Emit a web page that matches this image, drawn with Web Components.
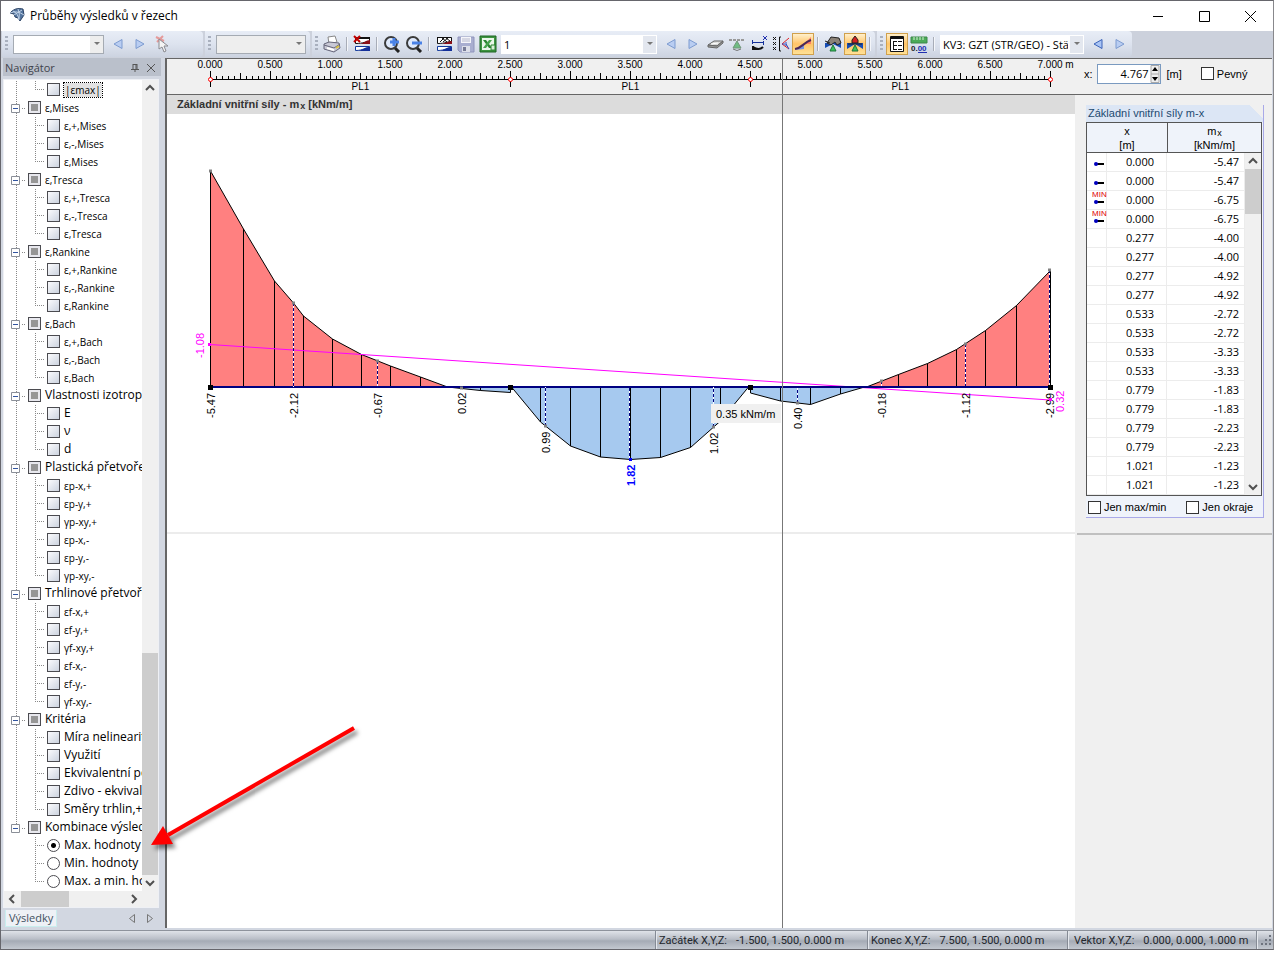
<!DOCTYPE html>
<html lang="cs">
<head>
<meta charset="utf-8">
<title>Průběhy výsledků v řezech</title>
<style>
html, body{
    margin: 0;
    height: 100%;
    background: #fff;
}
body{
    font: 12px "Open Sans", "Noto Sans", sans-serif;
    color: #000;
}
</style>
</head>
<body>
<result-window></result-window>

<script>
// ---------- icons, all on an 18 x 18 grid ----------
const ICONS = {
    prev: '<path d="M13 4.500v9L5 9z" fill="#b9cdf2" stroke="#7d9bd0"/>',
    next: '<path d="M5 4.500v9L13 9z" fill="#b9cdf2" stroke="#7d9bd0"/>',
    prevDark: '<path d="M13 4.500v9L5 9z" fill="#a9c4f5" stroke="#3a62b8"/>',
    pick: '<path d="M3 2l8 4M10 1L4 7" stroke="#e59a9a" stroke-width="2"/><path d="M6 4v10l3-2 2 5 2-1-2-5h4z" fill="#f4f4f4" stroke="#8a8a90"/>',
    print: '<path d="M5 2l7-1 2 6-8 2z" fill="#fff" stroke="#888"/><path d="M1 9l5-2 10 1 1 5-6 4-10-3z" fill="#c9c9d6" stroke="#66667a"/><path d="M1 10l10 3 6-4" fill="none" stroke="#66667a"/><path d="M4 13l7 2" stroke="#fff" stroke-width="2"/><path d="M13 13l3-2" stroke="#d8c040" stroke-width="2"/>',
    clear: '<path d="M2.500 2.500h14v4c-4 0-6 2-14 2z" fill="#fff" stroke="#111"/><path d="M17 5c-4 0-6 3-10 4h10z" fill="#8a0f18"/><path d="M2 3h15" stroke="#111" stroke-width="2"/><path d="M2.500 11.500h14v1c-5 0-6 3-14 3z" fill="#fff" stroke="#123a9c"/><path d="M17 12c-5 0-7 3-12 4h12z" fill="#14309a"/><path d="M1 1l6 6M7 1L1 7" stroke="#c00000" stroke-width="2"/>',
    zoomIn: '<path d="M11 12l5 5" stroke="#222" stroke-width="3"/><circle cx="8" cy="8" r="6" fill="#dfe9fb" stroke="#3a3a3a" stroke-width="2"/><path d="M11 3v8M7 7h9" stroke="#4a82e6" stroke-width="3"/>',
    zoomOut: '<path d="M11 12l5 5" stroke="#222" stroke-width="3"/><circle cx="8" cy="8" r="6" fill="#dfe9fb" stroke="#3a3a3a" stroke-width="2"/><path d="M7 8h10" stroke="#4a82e6" stroke-width="3"/>',
    diagram: '<path d="M2.500 2.500h14v4c-4 0-6 2-14 2z" fill="#fff" stroke="#111"/><path d="M17 6c-4 0-6 2-10 3h10z" fill="#8a0f18"/><path d="M2 2.500h6M5 7l4-4M8 7l5-4M7 3l5 4M11 3l4 3" stroke="#111"/><path d="M2.500 11.500h14v1c-5 0-6 3-14 3z" fill="#fff" stroke="#123a9c"/><path d="M17 12c-5 0-7 3-12 4h12z" fill="#14309a"/>',
    save: '<path d="M1 2h16v15H3l-2-2z" fill="#a9aed0" stroke="#8f94bb"/><path d="M4 2h10v6H4z" fill="#f5f5fa"/><path d="M5 4h8M5 6h8" stroke="#b5b8cc"/><path d="M5 11h8v6H5z" fill="#dddfe9"/><path d="M6 12h3v4H6z" fill="#777b96"/>',
    excel: '<path d="M1 1h16v16H1z" fill="#3d9440" stroke="#1d6422"/><path d="M3 3h12v12H3z" fill="#eaf6ea"/><path d="M4 5h3l6 8h-3z" fill="#2a8431"/><path d="M13 5h-3l-6 8h3z" fill="#46a44c"/><path d="M12 10h4v5h-4z" fill="#d9efd9" stroke="#2a8431"/>',
    section: '<path d="M2 10l6-4h9l-6 5z" fill="#d8d8d8" stroke="#666"/><path d="M2 10v2l9 1 6-5V6l-6 5z" fill="#999" stroke="#666"/><path d="M5 9l7-1" stroke="#fff"/>',
    support: '<path d="M1 5h16" stroke="#999" stroke-width="2" stroke-dasharray="3 1"/><path d="M9 6l-4 7h8z" fill="#6fbd83" stroke="#72977a"/><path d="M5 14q4 3 8 0" fill="none" stroke="#777"/>',
    axes: '<path d="M2 7.500h12M2.500 5v4M13.500 6v4" stroke="#14309a"/><path d="M3 12q6 4 10 0M3 11v4M3 14h3" fill="none" stroke="#111" stroke-width="2"/><path d="M13 1l4 4M17 1l-4 4" stroke="#2030b0"/>',
    extremes: '<path d="M1 2l3 3M4 2L1 5M1 7l3 3M4 7l-3 3M1 12l3 3M4 12l-3 3" stroke="#111"/><path d="M9 2H7.500v14H9" stroke="#111"/><path d="M17 3l-7 6 7 5" fill="none" stroke="#e02020"/><path d="M10 9h3M14 7v4M14 9l3 5" stroke="#3048c0"/>',
    smooth: '<path d="M10 9l7-7v7z" fill="#ff8066"/><path d="M1 15l9-5v4z" fill="#7590de"/><path d="M1 14c7-1 8-6 16-9" fill="none" stroke="#4b2858" stroke-width="2"/>',
    hand: '<path d="M1 8h16v5L9 9 1 13z" fill="#164cb4"/><path d="M3 8l4-6 8 1 2 5-4 2-2-3-4 3z" fill="#8b8278" stroke="#222"/><path d="M9 10l-3 6h6z" fill="#39c65c" stroke="#20733a"/><path d="M1 6l5 2" stroke="#222"/>',
    load: '<path d="M1 8h16v6L9 9 1 14z" fill="#164cb4"/><path d="M6 8V5l3-4 3 4v3z" fill="#d32020" stroke="#222"/><path d="M2 9h14" stroke="#222"/><path d="M9 10l-3 6h6z" fill="#39c65c" stroke="#20733a"/>',
    list: '<path d="M2.500 1.500h13v15h-13z" fill="#fff" stroke="#111"/><path d="M2 3h14" stroke="#111" stroke-width="2"/><path d="M5.500 6v8M5 6.500h4M5 10.500h4M5 14.500h4M10 6.500h4M10 10.500h4M10 14.500h4" stroke="#111"/>',
    values: '<path d="M1 2h16v6H1z" fill="#4cab59" stroke="#3d8848"/><path d="M4 2v3M7 2v3M10 2v3M13 2v3" stroke="#d9f0d9"/><text x="1" y="16" font-size="8" font-weight="bold" font-family="Liberation Sans" fill="#222">0.<tspan fill="#2030b0">00</tspan></text><path d="M8 17.500h9" stroke="#2030b0"/>'
};

const icon = name => `<svg width="18" height="18" viewBox="0 0 18 18" fill="none" aria-hidden="true">${ICONS[name]}</svg>`;

// ---------- title bar ----------
class TitleBar extends HTMLElement{
    constructor(){
        super();
        this.attachShadow({mode: 'open'}).innerHTML = `
<style>
:host{ display: flex; align-items: center; height: 30px; padding-left: 7px; background: #fff; }
h1{ flex: 1; margin: 0 0 1px 4px; font-size: 12px; font-weight: normal; }
button{ width: 46px; height: 28px; padding: 0; border: 0; background: none; }
svg{ display: block; margin: auto; }
.logo{ margin: 0 0 3px; }
</style>
<svg class="logo" width="18" height="16" viewBox="0 0 18 16"><path d="M2 6Q7 0 15 2l1 6-4 6-2-3-3-1-1-3z" fill="#54759f" stroke="#2c4365"/><path d="M2 6q7-3 14 2M5 4q5 2 6 9M10 2q2 5 1 10M6 8l8-5" fill="none" stroke="#c3d4e8"/></svg>
<h1><slot></slot></h1>
<button aria-label="Minimalizovat"><svg width="11" height="11"><path d="M0 5.500h10" stroke="#000"/></svg></button>
<button aria-label="Maximalizovat"><svg width="11" height="11"><path d="M.5.500h10v10H.5z" fill="none" stroke="#000"/></svg></button>
<button aria-label="Zavřít"><svg width="11" height="11"><path d="M0 0l11 11M11 0L0 11" stroke="#000"/></svg></button>`;
    }
}
customElements.define('title-bar', TitleBar);

// ---------- toolbar parts ----------
class ToolGroup extends HTMLElement{
    constructor(){
        super();
        this.attachShadow({mode: 'open'}).innerHTML = `
<style>
:host{ display: flex; align-items: center; box-sizing: border-box; height: 26px; padding-right: 1px; border-radius: 0 4px 4px 0; background: linear-gradient(#e8edf6, #dde3ef 50%, #ccd3e0); }
i{ width: 3px; height: 16px; margin: 0 3px; background: repeating-linear-gradient(#a9b0be 0 2px, transparent 2px 4px); }
</style>
<i></i><slot></slot>`;
    }
}
customElements.define('tool-group', ToolGroup);

class ToolButton extends HTMLElement{
    constructor(){
        super();
        this.attachShadow({mode: 'open'}).innerHTML = `
<style>
:host{ display: block; }
button{ box-sizing: border-box; display: grid; place-items: center; width: 22px; height: 22px; padding: 0; border: 1px solid transparent; background: none; }
:host([on]) button{ border-color: #d0a04c; background: linear-gradient(#fff0cc, #ffc468 50%, #ffe196); }
</style>
<button aria-label="${this.getAttribute('icon')}">${icon(this.getAttribute('icon'))}</button>`;
    }
}
customElements.define('tool-button', ToolButton);

class ToolSeparator extends HTMLElement{
    constructor(){
        super();
        this.attachShadow({mode: 'open'}).innerHTML = `
<style>
:host{ display: block; width: 8px; height: 14px; }
i{ display: block; width: 1px; height: 14px; margin-left: 3px; background: #a8adb8; border-right: 1px solid #f4f6fa; }
</style><i></i>`;
    }
}
customElements.define('tool-separator', ToolSeparator);

class ComboBox extends HTMLElement{
    constructor(){
        super();
        const value = this.getAttribute('value') || '';
        this.attachShadow({mode: 'open'}).innerHTML = `
<style>
:host{ display: flex; box-sizing: border-box; height: 19px; margin: 0 3px 0 2px; border: 1px solid #fff; background: #fff; }
:host([framed]){ border-color: #a5abb3; }
:host([disabled]){ background: #eee; }
select{ flex: 1; min-width: 0; appearance: none; border: 0; padding: 0 2px; background: none; font: 11px "Open Sans", sans-serif; color: #000; }
span{ display: grid; place-items: center; width: 13px; background: #e3e7ef; }
:host([framed]) span{ background: #eee; }
</style>
<select aria-label="Výběr"><option>${value}</option></select>
<span><svg width="6" height="4"><path d="M0 0h6L3 3z" fill="#777"/></svg></span>`;
    }
}
customElements.define('combo-box', ComboBox);

class ToolBar extends HTMLElement{
    constructor(){
        super();
        this.attachShadow({mode: 'open'}).innerHTML = `
<style>
:host{ display: flex; gap: 2px; height: 27px; padding-left: 1px; background: #ccd1dc; }
.navigation{ min-width: 201px; }
.navigation combo-box, .cases combo-box{ width: 91px; }
.cases{ width: 105px; }
.results combo-box{ width: 156px; }
.loads combo-box{ width: 144px; }
</style>
<tool-group class="navigation">
    <combo-box framed></combo-box>
    <tool-button icon="prev"></tool-button><tool-button icon="next"></tool-button><tool-button icon="pick"></tool-button>
</tool-group>
<tool-group class="cases"><combo-box framed disabled></combo-box></tool-group>
<tool-group class="results">
    <tool-button icon="print"></tool-button><tool-separator></tool-separator>
    <tool-button icon="clear"></tool-button><tool-separator></tool-separator>
    <tool-button icon="zoomIn"></tool-button><tool-button icon="zoomOut"></tool-button><tool-separator></tool-separator>
    <tool-button icon="diagram"></tool-button><tool-button icon="save"></tool-button><tool-button icon="excel"></tool-button>
    <combo-box value="1"></combo-box>
    <tool-button icon="prev"></tool-button><tool-button icon="next"></tool-button>
    <tool-button icon="section"></tool-button><tool-button icon="support"></tool-button><tool-button icon="axes"></tool-button>
    <tool-button icon="extremes"></tool-button><tool-button icon="smooth" on></tool-button><tool-separator></tool-separator>
    <tool-button icon="hand"></tool-button><tool-button icon="load" on></tool-button><tool-separator></tool-separator>
</tool-group>
<tool-group class="loads">
    <tool-button icon="list" on></tool-button><tool-button icon="values"></tool-button><tool-separator></tool-separator>
    <combo-box value="KV3: GZT (STR/GEO) - Stä"></combo-box>
    <tool-button icon="prevDark"></tool-button><tool-button icon="next"></tool-button>
</tool-group>`;
    }
}
customElements.define('tool-bar', ToolBar);

// ---------- scroll bar: before / thumb / after are flex shares of the track ----------
class ScrollTrack extends HTMLElement{
    constructor(){
        super();
        const [before, thumb, after] = this.getAttribute('track').split(' ');
        this.attachShadow({mode: 'open'}).innerHTML = `
<style>
:host{ display: flex; flex-direction: column; background: #f0f0f0; }
:host([horizontal]){ flex-direction: row; }
svg{ flex: none; width: 16px; height: 16px; }
:host([horizontal]) svg{ transform: rotate(-90deg); }
i{ flex: ${thumb} 0 0px; background: #cdcdcd; }
b{ flex: ${before} 0 0px; }
b + i + b{ flex-grow: ${after}; }
</style>
<svg viewBox="0 0 16 16"><path d="M4 10l4-4 4 4" fill="none" stroke="#505050" stroke-width="2"/></svg>
<b></b><i></i><b></b>
<svg viewBox="0 0 16 16"><path d="M4 6l4 4 4-4" fill="none" stroke="#505050" stroke-width="2"/></svg>`;
    }
}
customElements.define('scroll-track', ScrollTrack);

// ---------- navigator ----------
class TreeRow extends HTMLElement{
    constructor(){
        super();
        const type = this.hasAttribute('radio') ? 'radio' : 'checkbox';
        this.attachShadow({mode: 'open'}).innerHTML = `
<style>
:host{ display: flex; height: 18px; white-space: nowrap; }
.rail{ display: grid; align-items: center; flex: none; width: 24px; padding-left: 7px; box-sizing: border-box; background: repeating-linear-gradient(#888 0 1px, transparent 1px 2px) 12px 0 / 1px 100% no-repeat; }
:host([norail]) .rail{ background: none; }
:host([lastgroup]) .rail{ background-size: 1px 9px; }
.rail svg{ display: none; }
:host([group]) .rail svg{ display: block; }
.branch{ flex: none; width: 19px; background:
    repeating-linear-gradient(#888 0 1px, transparent 1px 2px) 7px 0 / 1px 100% no-repeat,
    repeating-linear-gradient(90deg, #888 0 1px, transparent 1px 2px) 7px 8px / 9px 1px no-repeat; }
:host([last]) .branch{ background-size: 1px 9px, 9px 1px; }
:host([group]) .branch{ display: none; }
label{ display: flex; align-items: center; gap: 4px; height: 18px; }
input{ appearance: none; flex: none; box-sizing: border-box; width: 13px; height: 13px; margin: 0 0 2px; border: 1px solid #4b4b50; background: linear-gradient(135deg, #fbfbfd, #ccd3df); }
:host([group]) input{ background: #969696; border-color: #4b4b50; box-shadow: inset 0 0 0 2px #e8e8ee; }
input[type=radio]{ border-radius: 50%; background: #fff; }
input[type=radio]:checked{ background: radial-gradient(#000 0 2px, #fff 3px); }
span{ line-height: 16px; padding-bottom: 2px; }
:host([small]) span{ font-size: 10px; line-height: 14px; padding-bottom: 0; }
:host([selected]) span{ padding: 0 1px; background: #e2e2e2; outline: 1px dotted #000; }
</style>
<div class="rail"><svg width="15" height="11"><path d="M.5 1.500h8v8h-8z" fill="#fff" stroke="#8a8f98"/><path d="M2 5.500h5" stroke="#3355a0"/><path d="M11 5.500h1M13 5.500h1" stroke="#888"/></svg></div>
<div class="branch"></div>
<label><input type="${type}" name="row" ${this.hasAttribute('checked') ? 'checked' : ''}><span><slot></slot></span></label>`;
    }
}
customElements.define('tree-row', TreeRow);

const TREE = [
    ['ε,Mises', ['ε,+,Mises', 'ε,-,Mises', 'ε,Mises'], 'small'],
    ['ε,Tresca', ['ε,+,Tresca', 'ε,-,Tresca', 'ε,Tresca'], 'small'],
    ['ε,Rankine', ['ε,+,Rankine', 'ε,-,Rankine', 'ε,Rankine'], 'small'],
    ['ε,Bach', ['ε,+,Bach', 'ε,-,Bach', 'ε,Bach'], 'small'],
    ['Vlastnosti izotropn', ['E', 'ν', 'd'], ''],
    ['Plastická přetvoře', ['εp-x,+', 'εp-y,+', 'γp-xy,+', 'εp-x,-', 'εp-y,-', 'γp-xy,-'], ''],
    ['Trhlinové přetvoře', ['εf-x,+', 'εf-y,+', 'γf-xy,+', 'εf-x,-', 'εf-y,-', 'γf-xy,-'], ''],
    ['Kritéria', ['Míra nelinearity', 'Využití', 'Ekvivalentní po', 'Zdivo - ekvival', 'Směry trhlin,+'], ''],
    ['Kombinace výsled', ['Max. hodnoty', 'Min. hodnoty', 'Max. a min. ho'], 'radio']
];

class NavigatorPanel extends HTMLElement{
    constructor(){
        super();
        this.attachShadow({mode: 'open'}).innerHTML = `
<style>
:host{ display: flex; flex-direction: column; min-height: 0; background: #d2d7e1; }
header{ display: flex; align-items: center; height: 18px; flex: none; padding: 0 2px; background: #bac0cb; color: #3f434b; font-size: 11px; }
h2{ flex: 1; margin: 0; font-size: 11px; font-weight: normal; }
header button{ width: 16px; height: 16px; padding: 0; border: 0; background: none; }
.view{ flex: 1; min-height: 0; display: grid; grid-template: minmax(0, 1fr) 16px / minmax(0, 1fr) 16px; margin: 3px 2px 0 0; border: 1px solid #eef0f5; background: #fff; }
.tree{ overflow: hidden; font-size: 12px; padding-top: 1px; }
.corner{ background: #f0f0f0; }
footer{ display: flex; align-items: center; height: 20px; flex: none; gap: 12px; padding: 0 8px 0 2px; color: #3f434b; }
footer a{ margin-right: auto; padding: 0 3px; border: 1px solid #c9eeee; border-top: 0; background: #eef1f6; color: #3f5060; font-size: 11px; line-height: 16px; text-decoration: none; }
</style>
<header><h2>Navigátor</h2>
<button aria-label="Připnout"><svg width="8" height="8"><path d="M2 0v5M6 0v5M2 .5h4M0 5.500h8M4 5v3M5 0v5" stroke="#555"/></svg></button>
<button aria-label="Zavřít"><svg width="8" height="8"><path d="M0 0l8 8M8 0L0 8" stroke="#555"/></svg></button></header>
<div class="view">
    <div class="tree"></div>
    <scroll-track track="556 221 0"></scroll-track>
    <scroll-track horizontal track="1 47 56"></scroll-track>
    <div class="corner"></div>
</div>
<footer><a href="#">Výsledky</a>
<svg width="6" height="9"><path d="M5.500.5v8l-5-4z" fill="none" stroke="#777"/></svg>
<svg width="6" height="9"><path d="M.5.500v8l5-4z" fill="none" stroke="#777"/></svg></footer>`;

        const small = text => /^[εγ]/.test(text) ? 'small' : '';
        let rows = '<tree-row selected last small>|εmax|</tree-row>';
        TREE.forEach(([name, items, kind], g) => {
            const lastGroup = g === TREE.length - 1;
            rows += `<tree-row group ${small(name)} ${lastGroup ? 'lastgroup' : ''}>${name}</tree-row>`;
            items.forEach((item, i) => {
                rows += `<tree-row ${small(item)} ${kind === 'radio' ? 'radio' : ''} ${kind === 'radio' && i === 0 ? 'checked' : ''}
                    ${i === items.length - 1 ? 'last' : ''} ${lastGroup ? 'norail' : ''}>${item}</tree-row>`;
            });
        });
        this.shadowRoot.querySelector('.tree').innerHTML = rows;
    }
}
customElements.define('navigator-panel', NavigatorPanel);

// ---------- ruler ----------
class RulerStrip extends HTMLElement{
    constructor(){
        super();
        const X0 = 43.5, METRE = 120;
        let ticks = '', labels = '', nodes = '';
        for(let i = 0; i <= 140; i++){
            const x = X0 + i * METRE / 20;
            ticks += `M${x} 21v-${i % 10 === 0 ? 9 : i % 5 === 0 ? 7 : 4}`;
            if(i % 10 === 0){
                const text = (i / 20).toFixed(3);
                labels += `<text x="${x - 13}" y="9">${text}${i === 140 ? ' m' : ''}</text>`;
            }
        }
        [0, 2.5, 4.5, 7].forEach(m => {
            const x = X0 + m * METRE;
            nodes += `<path d="M${x} 12v16" stroke="#000"/><circle cx="${x}" cy="20.5" r="2" fill="#fff" stroke="#f00"/>`;
        });
        [1.25, 3.5, 5.75].forEach(m => {
            labels += `<text x="${X0 + m * METRE}" y="31" text-anchor="middle">PL1</text>`;
        });
        this.attachShadow({mode: 'open'}).innerHTML = `
<style>
:host{ display: block; background: #f0f0f0; }
svg{ display: block; width: 100%; }
text{ font: 10px "Liberation Sans", sans-serif; fill: #000; }
</style>
<svg viewBox="0 0 908 35"><path d="${ticks}M43 20.500h841" stroke="#000" fill="none"/>${nodes}${labels}</svg>`;
    }
}
customElements.define('ruler-strip', RulerStrip);

// ---------- diagram of the internal force ----------
const BASE = 387;
const AREAS = [
    ['#ff8080', [[210.5,171],[243.5,229],[274.5,281],[293.5,303],[303.5,316],[332.5,339],[361.5,354.5],[390.5,366],[420.5,377],[447.5,387]], [243.5,274.5,303.5,332.5,361.5,390.5,420.5]],
    ['#a6c9ef', [[447.5,387],[480.5,390.5],[510.5,392.5]], [480.5]],
    ['#a6c9ef', [[511.5,387],[540.5,422],[570.5,446],[600.5,457],[630.5,459.5],[660.5,457.5],[690.5,447.5],[720.5,421],[748.5,387]], [540.5,570.5,600.5,630.5,660.5,690.5,720.5]],
    ['#a6c9ef', [[750.5,393],[780.5,401],[810.5,404.5],[840.5,394],[864.5,387]], [780.5,810.5,840.5]],
    ['#ff8080', [[866.5,387],[898.5,374.5],[927.5,363.5],[956.5,349.5],[985.5,330.5],[1016.5,305.5],[1050.5,270.5]], [898.5,927.5,956.5,985.5,1016.5]]
];
// x, y of the result point, label, start of the rotated label
const VALUES = [
    [210.5, 171, '-5.47', 418], [293.5, 303, '-2.12', 418], [377.5, 361, '-0.67', 418], [461.5, 388, '0.02', 414],
    [545.5, 426, '0.99', 453], [713.5, 427, '1.02', 454], [797.5, 403, '0.40', 429],
    [881.5, 381, '-0.18', 418], [965.5, 344, '-1.12', 418], [1049.5, 270, '-2.99', 418]
];

class ForceDiagram extends HTMLElement{
    constructor(){
        super();
        let shapes = '';
        AREAS.forEach(([color, points, ribs]) => {
            const first = points[0][0], last = points[points.length - 1][0];
            shapes += `<path d="M${first} ${BASE}L${points.join('L')}L${last} ${BASE}" fill="${color}" stroke="#000"/>`;
            ribs.forEach(x => {
                shapes += `<path d="M${x} ${BASE}V${points.find(p => p[0] === x)[1]}" stroke="#000"/>`;
            });
        });
        let marks = '';
        VALUES.forEach(([x, y, text, start], i) => {
            if(i > 0){
                marks += `<path d="M${x} ${y}V${BASE}" stroke="#fff"/><path d="M${x} ${y}V${BASE}" stroke="#000080" stroke-dasharray="3 2"/>`;
            }
            marks += `<path d="M${x - 1.5} ${y - 1.5}h3v3h-3z" fill="#808080"/>`;
            marks += `<text transform="translate(${x + 4} ${start}) rotate(-90)">${text}</text>`;
        });
        this.attachShadow({mode: 'open'}).innerHTML = `
<style>
:host{ display: block; background: #fff; }
svg{ display: block; width: 100%; }
text{ font: 11px "Liberation Sans", sans-serif; }
.extreme{ font-weight: bold; fill: #00f; }
.mean{ fill: #f0f; }
</style>
<svg viewBox="167 114 908 418">
${shapes}
<path d="M210 344.500L1050 400" stroke="#f0f"/>
<path d="M209 ${BASE}h842" stroke="#000080" stroke-width="2"/>
${marks}
<path d="M629.500 388V459" stroke="#fff"/>
<path d="M629.500 388V459" stroke="#000080" stroke-dasharray="3 2"/>
<path d="M629 458h3v3h-3z" fill="#00f"/>
<path d="M208 385h5v5h-5zM508 385h5v5h-5zM748 385h5v5h-5zM1048 385h5v5h-5z"/>
<path d="M208 343h3v3h-3zM1049 398h3v3h-3z" fill="#f0f"/>
<text class="extreme" transform="translate(635 486) rotate(-90)">1.82</text>
<text class="mean" transform="translate(204 358) rotate(-90)">-1.08</text>
<text class="mean" transform="translate(1064 412) rotate(-90)">0.32</text>
<path d="M711 404h70v19h-70z" fill="#f0f0f0"/>
<text x="716" y="418">0.35 kNm/m</text>
</svg>`;
    }
}
customElements.define('force-diagram', ForceDiagram);

// ---------- centre column ----------
class SectionView extends HTMLElement{
    constructor(){
        super();
        this.attachShadow({mode: 'open'}).innerHTML = `
<style>
:host{ position: relative; display: flex; flex-direction: column; min-width: 0; background: #fff; }
h2{ margin: 0; height: 20px; padding-left: 10px; border-top: 1px solid #666; background: #dcdcdc; color: #333; font: bold 11px/18px "Liberation Sans", sans-serif; box-sizing: border-box; }
sub{ font-size: 9px; line-height: 1; vertical-align: -1px; margin-left: 1px; }
.blank{ flex: 1; border-top: 2px solid #ececec; }
.cursor{ position: absolute; top: 0; bottom: 0; left: 67.7%; width: 1px; background: #777; }
</style>
<ruler-strip></ruler-strip>
<h2>Základní vnitřní síly - m<sub>x</sub> [kNm/m]</h2>
<force-diagram></force-diagram>
<div class="blank"></div>
<div class="cursor"></div>`;
    }
}
customElements.define('section-view', SectionView);

// ---------- right column ----------
class TickBox extends HTMLElement{
    constructor(){
        super();
        this.attachShadow({mode: 'open'}).innerHTML = `
<style>
:host{ display: block; font: 11px "Liberation Sans", sans-serif; }
label{ display: flex; align-items: center; gap: 3px; }
input{ appearance: none; box-sizing: border-box; width: 13px; height: 13px; margin: 0; border: 1px solid #333; background: #fff; }
</style>
<label><input type="checkbox"><slot></slot></label>`;
    }
}
customElements.define('tick-box', TickBox);

const X_VALUES = ['0.000', '0.277', '0.533', '0.779', '1.021'];
const M_VALUES = ['-5.47', '-5.47', '-6.75', '-6.75', '-4.00', '-4.00', '-4.92', '-4.92', '-2.72', '-2.72',
    '-3.33', '-3.33', '-1.83', '-1.83', '-2.23', '-2.23', '-1.23', '-1.23'];

class ResultTable extends HTMLElement{
    constructor(){
        super();
        const edge = '<path d="M4 11h8" stroke="#000" stroke-width="2"/><circle cx="4" cy="11" r="2" fill="#0000c0"/>';
        const min = '<text x="0" y="6">MIN</text>';
        const body = M_VALUES.map((m, i) => `<tr>
            <td class="mark">${i < 4 ? `<svg width="15" height="18">${i > 1 ? min : ''}${edge}</svg>` : ''}</td>
            <td class="x">${X_VALUES[Math.floor(i / 4)]}</td><td class="m">${m}</td>
            ${i === 0 ? `<td class="bar" rowspan="${M_VALUES.length}"><scroll-track track="0 45 266"></scroll-track></td>` : ''}</tr>`).join('');
        this.attachShadow({mode: 'open'}).innerHTML = `
<style>
:host{ display: block; width: 178px; box-sizing: border-box; border-right: 1px solid #a9a9e8; border-bottom: 1px solid #a9a9e8; background: #eff3fa; }
h2{ margin: 0; height: 17px; padding-left: 2px; background: linear-gradient(45deg, #dce6f5 93%, #f0f0f0 93%); color: #1d4a70; font: 11px/16px "Liberation Sans", sans-serif; }
table{ width: 176px; table-layout: fixed; border-collapse: separate; border-spacing: 0; border: 1px solid #555; background: #fff; }
th{ height: 30px; padding: 0; box-sizing: border-box; border-bottom: 1px solid #555; background: #eff3fa; font: 11px/14px "Liberation Sans", sans-serif; }
th + th{ border-left: 1px solid #555; }
sub{ font-size: 9px; line-height: 1; vertical-align: -1px; margin-left: 1px; }
td{ box-sizing: border-box; height: 19px; padding: 0; border-bottom: 1px solid #ececec; border-right: 1px solid #ececec; font: 11px/18px "Open Sans", sans-serif; text-align: right; }
.mark{ text-align: left; padding-left: 5px; }
.mark svg{ display: block; }
.x{ padding-right: 12px; }
.m{ padding-right: 5px; }
.bar{ height: 1px; border: 0; }
.bar scroll-track{ height: 100%; }
text{ font: 8px "Liberation Sans", sans-serif; fill: #e00000; }
footer{ display: flex; align-items: center; gap: 20px; height: 20px; padding: 1px 0 0 2px; }
</style>
<h2>Základní vnitřní síly m-x</h2>
<table>
<colgroup><col style="width:20px"><col style="width:60px"><col><col style="width:16px"></colgroup>
<thead><tr><th colspan="2">x<br>[m]</th><th colspan="2">m<sub>x</sub><br>[kNm/m]</th></tr></thead>
<tbody>${body}</tbody>
</table>
<footer><tick-box>Jen max/min</tick-box><tick-box>Jen okraje</tick-box></footer>`;
    }
}
customElements.define('result-table', ResultTable);

class DetailPanel extends HTMLElement{
    constructor(){
        super();
        this.attachShadow({mode: 'open'}).innerHTML = `
<style>
:host{ display: block; background: #f0f0f0; font: 11px "Liberation Sans", sans-serif; }
.position{ display: flex; align-items: center; box-sizing: border-box; height: 36px; padding: 0 0 6px 9px; border-bottom: 1px solid #666; }
.field{ display: flex; box-sizing: border-box; width: 64px; height: 20px; margin: 0 6px 0 4px; border: 1px solid #7a9ac0; background: #fff; }
.field input{ flex: 1; min-width: 0; border: 0; padding: 0 1px 0 0; font: 11px "Open Sans", sans-serif; text-align: right; background: none; }
.position tick-box{ margin-left: 19px; }
result-table{ margin: 10px 0 0 11px; }
hr{ height: 2px; margin: 15px 0 0 2px; border: 0; background: #c0c0c0; }
</style>
<div class="position"><label for="x">x:</label>
<div class="field"><input id="x" value="4.767"><svg width="10" height="18"><path d="M1 .500h8v17H1zM1 9h8" fill="#eee" stroke="#aaa"/><path d="M5 2L2 6h6zM5 16l-3-4h6z"/></svg></div>
<span>[m]</span><tick-box>Pevný</tick-box></div>
<result-table></result-table>
<hr>`;
    }
}
customElements.define('detail-panel', DetailPanel);

// ---------- status bar ----------
class StatusBar extends HTMLElement{
    constructor(){
        super();
        this.attachShadow({mode: 'open'}).innerHTML = `
<style>
:host{ display: flex; box-sizing: border-box; justify-content: flex-end; height: 19px; border-top: 1px solid #8e939c; background: linear-gradient(#dfe2e8, #b9bec7 45%, #a5abb5 55%, #c3c8d0); color: #22262c; font: 11px Roboto, "Open Sans", sans-serif; }
div{ display: flex; align-items: center; gap: 9px; box-sizing: border-box; padding-left: 3px; border-left: 1px solid #858b95; box-shadow: inset 1px 0 #e4e7ec; white-space: pre; }
.start{ width: 212px; }
.end{ width: 200px; }
.vector{ width: 189px; padding-left: 6px; }
.grip{ width: 17px; }
</style>
<div class="start"><span>Začátek X,Y,Z:</span><span>-1.500, 1.500, 0.000 m</span></div>
<div class="end"><span>Konec X,Y,Z:</span><span>7.500, 1.500, 0.000 m</span></div>
<div class="vector"><span>Vektor X,Y,Z:</span><span>0.000, 0.000, 1.000 m</span></div>
<div class="grip"><svg width="12" height="12"><path d="M9 1h2v2H9zM9 5h2v2H9zM5 5h2v2H5zM9 9h2v2H9zM5 9h2v2H5zM1 9h2v2H1z" fill="#6d737e"/></svg></div>`;
    }
}
customElements.define('status-bar', StatusBar);

// ---------- arrow laid over the window ----------
class PointerArrow extends HTMLElement{
    constructor(){
        super();
        this.attachShadow({mode: 'open'}).innerHTML = `
<style>
:host{ position: absolute; left: 148px; top: 720px; pointer-events: none; }
svg{ display: block; filter: drop-shadow(3px 4px 2px rgba(0, 0, 0, .5)); }
</style>
<svg width="220" height="140"><path d="M206 8L20 115" stroke="#f00" stroke-width="4"/><path d="M3 125L15 106 25 124z" fill="#f00"/></svg>`;
    }
}
customElements.define('pointer-arrow', PointerArrow);

// ---------- window ----------
class ResultWindow extends HTMLElement{
    constructor(){
        super();
        this.attachShadow({mode: 'open'}).innerHTML = `
<style>
:host{ position: relative; display: block; height: 100%; box-sizing: border-box; padding-bottom: 6px; }
.frame{ display: flex; flex-direction: column; box-sizing: border-box; height: 100%; border: 1px solid #66666c; border-right-color: #88888c; background: #d2d7e1; }
main{ flex: 1; min-height: 0; display: grid; grid-template-columns: 158px minmax(0, 1fr) 197px; grid-template-rows: minmax(0, 1fr); padding: 0 1px 2px 2px; }
section-view{ margin-left: 4px; border-left: 2px solid #666; }
section-view, detail-panel{ border-top: 1px solid #666; }
</style>
<div class="frame">
    <title-bar>Průběhy výsledků v řezech</title-bar>
    <tool-bar></tool-bar>
    <main>
        <navigator-panel></navigator-panel>
        <section-view></section-view>
        <detail-panel></detail-panel>
    </main>
    <status-bar></status-bar>
</div>
<pointer-arrow></pointer-arrow>`;
    }
}
customElements.define('result-window', ResultWindow);
</script>
</body>
</html>
